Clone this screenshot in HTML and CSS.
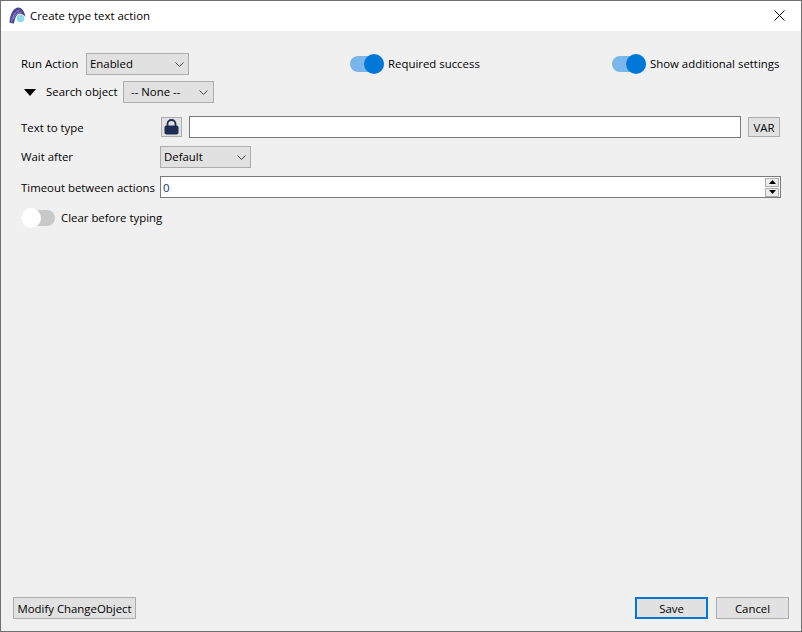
FILE: index.html
```html
<!DOCTYPE html>
<html lang="en">
<head>
<meta charset="utf-8">
<title>Create type text action</title>
<link rel="stylesheet" href="styles.css">
</head>
<body>
<div class="window">
  <header class="titlebar">
    <svg class="logo" width="17" height="17" viewBox="0 0 17 17">
      <circle cx="11.500" cy="11.500" r="3.800" fill="#8fd8e8"/>
      <path d="M0.500 15.500C1 7 4.500 0.500 9.500 0.500C13 0.500 15.500 4.500 16.500 10C14 7 10.500 6 8.500 7.500C6.500 9.500 5.500 13 5 16.500C3.500 16.500 2 16 0.500 15.500Z" fill="#4a4493"/>
      <path d="M2.500 15C3.500 9.500 6 4 10.500 3.500M4.500 12C6 8 8 5.500 12.500 5.500" fill="none" stroke="#a9a6d6" stroke-width=".8"/>
    </svg>
    <span class="title">Create type text action</span>
    <svg class="close" width="11" height="11" viewBox="0 0 11 11">
      <path d="M.5.500l10 10M10.500.500l-10 10" stroke="#000" stroke-width="1" fill="none"/>
    </svg>
  </header>

  <main class="content">
    <div class="row-top">
      <div class="group">
        <span class="label label-run">Run Action</span>
        <div class="select select-run"><span>Enabled</span><svg class="chev" width="9" height="5" viewBox="0 0 9 5"><path d="M.5.500l4 4 4-4" fill="none" stroke="#444"/></svg></div>
      </div>
      <div class="group toggle-group">
        <span class="toggle on"><i class="knob"></i></span>
        <span class="label">Required success</span>
      </div>
      <div class="group toggle-group">
        <span class="toggle on"><i class="knob"></i></span>
        <span class="label">Show additional settings</span>
      </div>
    </div>

    <div class="row-search">
      <svg class="caret" width="12" height="7" viewBox="0 0 12 7"><path d="M0 0h12L6 7z" fill="#000"/></svg>
      <span class="label label-search">Search object</span>
      <div class="select select-none"><span>-- None --</span><svg class="chev" width="9" height="5" viewBox="0 0 9 5"><path d="M.5.500l4 4 4-4" fill="none" stroke="#444"/></svg></div>
    </div>

    <div class="form-row row-text">
      <span class="label form-label">Text to type</span>
      <button class="btn btn-lock" type="button">
        <svg width="15" height="16" viewBox="0 0 15 16"><path d="M3.500 8V5a4 4 0 0 1 8 0V8" fill="none" stroke="#1e2b52" stroke-width="1.800"/><rect x="0.500" y="6.500" width="14" height="9" rx="2" fill="#1e2b52"/></svg>
      </button>
      <div class="input input-text"></div>
      <button class="btn btn-var" type="button">VAR</button>
    </div>

    <div class="form-row row-wait">
      <span class="label form-label form-label-wait">Wait after</span>
      <div class="select select-wait"><span>Default</span><svg class="chev" width="9" height="5" viewBox="0 0 9 5"><path d="M.5.500l4 4 4-4" fill="none" stroke="#444"/></svg></div>
    </div>

    <div class="form-row row-timeout">
      <span class="label form-label">Timeout between actions</span>
      <div class="input input-number">
        <span class="value">0</span>
        <div class="spinner">
          <span class="spin"><svg width="7" height="4" viewBox="0 0 7 4"><path d="M3.500 0L7 4H0z" fill="#000"/></svg></span>
          <span class="spin"><svg width="7" height="4" viewBox="0 0 7 4"><path d="M0 0h7L3.500 4z" fill="#000"/></svg></span>
        </div>
      </div>
    </div>

    <div class="row-clear">
      <span class="toggle off"><i class="knob"></i></span>
      <span class="label">Clear before typing</span>
    </div>
  </main>

  <footer class="footer">
    <button class="btn btn-modify" type="button">Modify ChangeObject</button>
    <div class="actions">
      <button class="btn btn-action btn-default" type="button">Save</button>
      <button class="btn btn-action" type="button">Cancel</button>
    </div>
  </footer>
</div>
</body>
</html>
```
FILE: styles.css
```css
* { box-sizing: border-box; }
html, body { margin: 0; padding: 0; }
body {
  width: 802px;
  height: 632px;
  overflow: hidden;
  font-family: "Open Sans", "Noto Sans", sans-serif;
  font-size: 11.4px;
  color: #000;
}
.window {
  width: 802px;
  height: 632px;
  display: flex;
  flex-direction: column;
  border: 1px solid #707070;
  background: #f0f0f0;
}
.titlebar {
  height: 30px;
  flex: none;
  display: flex;
  align-items: center;
  background: #fff;
  padding: 0 16px 0 8px;
}
.logo { margin-right: 4px; margin-top: -1px; }
.title { flex: 1; padding-bottom: 2px; }
.close { margin-top: -1px; }
.content {
  flex: 1;
  padding: 22px 20px 0 20px;
  display: flex;
  flex-direction: column;
}
.label { white-space: nowrap; line-height: 16px; }
.group { display: flex; align-items: center; }
.label-run { width: 65px; flex: none; }
.label-search { width: 77px; flex: none; }
.row-top {
  display: grid;
  grid-template-columns: 329px 262px auto;
  height: 22px;
}
.toggle-group { gap: 4px; }
.select {
  display: flex;
  align-items: center;
  justify-content: space-between;
  height: 22px;
  background: #e1e1e1;
  border: 1px solid #adadad;
  padding: 0 4px 1px 3px;
}
.select svg { margin-top: 2px; }
.select-run { width: 103px; }
.select-none { width: 91px; padding-left: 7px; padding-right: 5px; }
.select-wait { width: 91px; }
.chev { flex: none; }
.toggle {
  position: relative;
  display: block;
  width: 34px;
  height: 16px;
  border-radius: 8px;
  flex: none;
}
.toggle.on { background: #7ab6ea; }
.toggle.off { background: #c8c8c8; }
.knob {
  position: absolute;
  top: -2px;
  width: 20px;
  height: 20px;
  border-radius: 50%;
}
.on .knob { right: 0; background: #0078d7; }
.off .knob { left: 0; background: #fff; }
.row-search {
  display: flex;
  align-items: center;
  height: 22px;
  margin-top: 6px;
  padding-left: 3px;
}
.caret { margin-right: 10px; }
.form-row { display: flex; align-items: center; height: 22px; }
.form-label { width: 139px; flex: none; padding-top: 1px; }
.form-label-wait { padding-top: 0; }
.row-text { margin-top: 13px; }
.row-wait { margin-top: 8px; }
.row-timeout { margin-top: 8px; }
.btn {
  font: inherit;
  color: inherit;
  background: #e1e1e1;
  border: 1px solid #adadad;
  padding: 0;
  margin: 0;
}
.btn-lock {
  width: 21px;
  height: 20px;
  margin-left: 1px;
  display: flex;
  align-items: center;
  justify-content: center;
}
.input { background: #fff; border: 1px solid #7a7a7a; height: 22px; }
.input-text { width: 552px; margin-left: 7px; }
.btn-var { width: 32px; height: 20px; margin-left: 7px; }
.input-number {
  width: 621px;
  display: flex;
  align-items: center;
  justify-content: space-between;
  padding: 0 1px 0 2px;
  color: #10306a;
}
.spinner { display: flex; flex-direction: column; gap: 1px; }
.spin {
  width: 14px;
  height: 9px;
  background: #ececec;
  border: 1px solid #adadad;
  display: flex;
  align-items: center;
  justify-content: center;
}
.row-clear {
  display: flex;
  align-items: center;
  gap: 6px;
  margin-top: 10px;
  height: 20px;
}
.footer {
  flex: none;
  height: 34px;
  display: flex;
  align-items: flex-start;
  justify-content: space-between;
  padding: 0 12px;
}
.btn-modify { width: 123px; height: 22px; }
.actions { display: flex; gap: 8px; }
.btn-action { width: 73px; height: 22px; }
.btn-default { border: 2px solid #0078d7; }
```
